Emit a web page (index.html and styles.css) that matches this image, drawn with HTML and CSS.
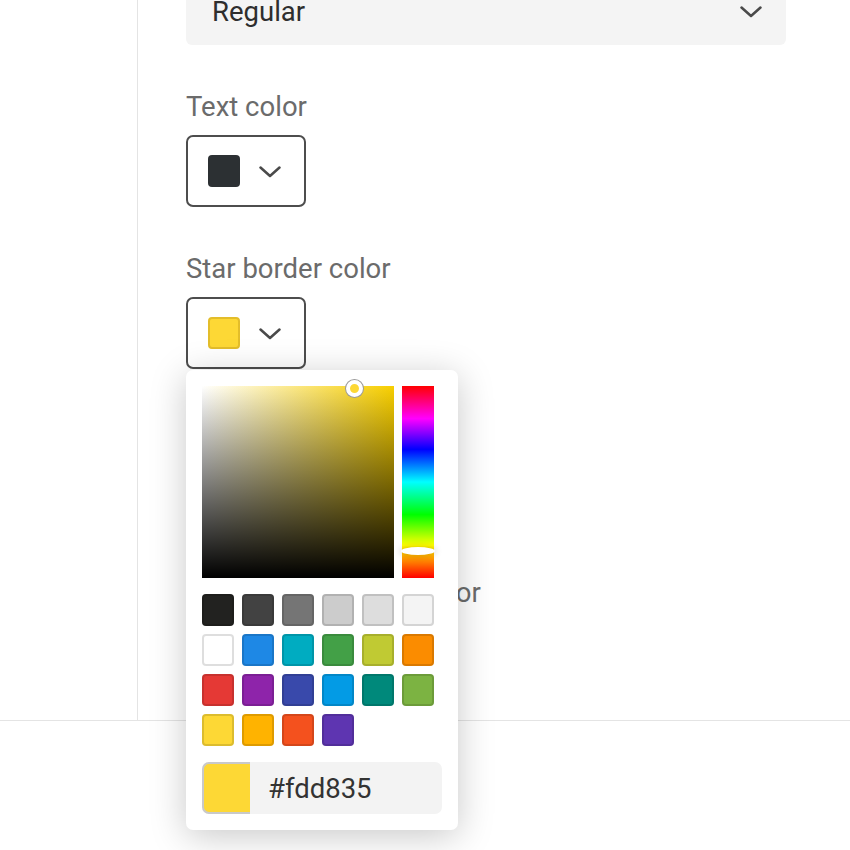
FILE: index.html
```html
<!DOCTYPE html>
<html lang="en">
  <head>
    <meta charset="UTF-8">
    <meta name="viewport" content="width=device-width, initial-scale=1.0">
    <title>Star rating style</title>
    <link rel="stylesheet" href="styles.css">
  </head>
  <body>
    <div class="page">
      <aside class="rail"></aside>
      <main class="panel">
        <div class="select">
          <span class="select-value">Regular</span>
          <svg class="chevron" width="22" height="12" viewBox="0 0 22 12"><polyline points="1.5,1.5 11,10 20.5,1.5"/></svg>
        </div>

        <div class="field">
          <div class="label">Text color</div>
          <button class="color-btn">
            <span class="chip chip-text"></span>
            <svg class="chevron" width="22" height="12" viewBox="0 0 22 12"><polyline points="1.5,1.5 11,10 20.5,1.5"/></svg>
          </button>
        </div>

        <div class="field">
          <div class="label">Star border color</div>
          <div class="picker-anchor">
            <button class="color-btn">
              <span class="chip chip-star"></span>
              <svg class="chevron" width="22" height="12" viewBox="0 0 22 12"><polyline points="1.5,1.5 11,10 20.5,1.5"/></svg>
            </button>

            <div class="picker">
              <div class="picker-top">
                <div class="sv-area">
                  <span class="sv-handle"></span>
                </div>
                <div class="hue-bar">
                  <span class="hue-handle"></span>
                </div>
              </div>
              <div class="swatches">
                <span class="swatch" style="background:#222220"></span>
                <span class="swatch" style="background:#424242"></span>
                <span class="swatch" style="background:#757575"></span>
                <span class="swatch" style="background:#cccccc"></span>
                <span class="swatch" style="background:#dddddd"></span>
                <span class="swatch" style="background:#f4f4f4"></span>
                <span class="swatch" style="background:#ffffff"></span>
                <span class="swatch" style="background:#1e88e5"></span>
                <span class="swatch" style="background:#00acc1"></span>
                <span class="swatch" style="background:#43a047"></span>
                <span class="swatch" style="background:#c0ca33"></span>
                <span class="swatch" style="background:#fb8c00"></span>
                <span class="swatch" style="background:#e53935"></span>
                <span class="swatch" style="background:#8e24aa"></span>
                <span class="swatch" style="background:#3949ab"></span>
                <span class="swatch" style="background:#039be5"></span>
                <span class="swatch" style="background:#00897b"></span>
                <span class="swatch" style="background:#7cb342"></span>
                <span class="swatch" style="background:#fdd835"></span>
                <span class="swatch" style="background:#ffb300"></span>
                <span class="swatch" style="background:#f4511e"></span>
                <span class="swatch" style="background:#5e35b1"></span>
              </div>
              <div class="hex-row">
                <span class="hex-chip"></span>
                <input class="hex-input" type="text" value="#fdd835" spellcheck="false">
              </div>
            </div>
          </div>
        </div>

        <div class="field">
          <div class="label">Star fill color</div>
          <button class="color-btn">
            <span class="chip chip-star"></span>
            <svg class="chevron" width="22" height="12" viewBox="0 0 22 12"><polyline points="1.5,1.5 11,10 20.5,1.5"/></svg>
          </button>
        </div>

        <div class="field">
          <div class="label">Unselected star fill color</div>
          <button class="color-btn">
            <span class="chip chip-empty"></span>
            <svg class="chevron" width="22" height="12" viewBox="0 0 22 12"><polyline points="1.5,1.5 11,10 20.5,1.5"/></svg>
          </button>
        </div>
      </main>
    </div>
    <footer class="footer"></footer>
  </body>
</html>
```

FILE: styles.css
```css
*{
margin:0;
padding:0;
box-sizing:border-box;
}

body{
    background-color: #fff;
    color: #333;
    font-family: Roboto, "Liberation Sans", sans-serif;
    overflow: hidden;
}

.page{
    display:flex;
    height:721px;
    border-bottom:1px solid #e4e4e4;
}

.rail{
    width:138px;
    flex-shrink:0;
    border-right:1px solid #e4e4e4;
}

.panel{
    flex:1;
    padding:0 64px 0 48px;
    overflow:visible;
}

.select{
    width:600px;
    height:67px;
    margin-top:-22px;
    padding:0 24px 0 26px;
    display:flex;
    align-items:center;
    justify-content:space-between;
    background-color:#f4f4f4;
    border-radius:6px;
    font-size:27.5px;
    color:#2e2e2e;
}

.chevron polyline{
    fill:none;
    stroke:#4a4a4a;
    stroke-width:2.5;
    stroke-linecap:round;
    stroke-linejoin:round;
}

.field{
    margin-top:46px;
}

.label{
    font-size:27.5px;
    line-height:32px;
    color:#6b6b6b;
    margin-bottom:12px;
}

.color-btn{
    width:120px;
    height:72px;
    padding:0 0 0 20px;
    display:flex;
    align-items:center;
    gap:19px;
    background-color:#fff;
    border:2px solid #4d4d4d;
    border-radius:7px;
    cursor:pointer;
}

.color-btn .chevron{
    margin-top:2px;
}

.chip{
    width:32px;
    height:32px;
    border-radius:4px;
}

.chip-text{
    background-color:#2c3033;
}

.chip-star{
    background-color:#fdd835;
    border:2px solid #e3bd2a;
}

.chip-empty{
    background-color:#fff;
    border:2px solid #ddd;
}

.picker-anchor{
    position:relative;
    width:120px;
}

/* popup colour picker, lies over the following fields */
.picker{
    position:absolute;
    top:73px;
    left:0;
    z-index:5;
    width:272px;
    padding:16px;
    background-color:#fff;
    border-radius:7px;
    box-shadow:0 6px 36px rgba(0,0,0,0.22);
}

.picker-top{
    display:flex;
    gap:8px;
}

.sv-area{
    position:relative;
    width:192px;
    height:192px;
    background:
        linear-gradient(to top, #000, rgba(0,0,0,0)),
        linear-gradient(to right, #fff, #f8cf00);
}

.sv-handle{
    position:absolute;
    left:144px;
    top:-6px;
    width:17px;
    height:17px;
    border-radius:50%;
    background-color:#fdd835;
    border:4px solid #fff;
    box-shadow:0 0 0 1px #9a9a9a;
}

.hue-bar{
    position:relative;
    width:32px;
    height:192px;
    background:linear-gradient(to bottom, #f00 0%, #f0f 17%, #00f 33%, #0ff 50%, #0f0 67%, #ff0 83%, #f00 100%);
}

.hue-handle{
    position:absolute;
    left:-1px;
    top:161px;
    width:34px;
    height:8px;
    border-radius:50%;
    background-color:#fff;
    box-shadow:0 0 6px 2px rgba(0,0,0,0.12);
}

.swatches{
    margin-top:16px;
    display:grid;
    grid-template-columns:repeat(6, 32px);
    gap:8px;
}

.swatch{
    width:32px;
    height:32px;
    border-radius:4px;
    box-shadow:inset 0 0 0 2px rgba(0,0,0,0.13);
}

.hex-row{
    margin-top:16px;
    height:52px;
    display:flex;
    background-color:#f3f3f3;
    border-radius:7px;
}

.hex-chip{
    width:48px;
    flex-shrink:0;
    background-color:#fdd835;
    border:2px solid #c9c9c9;
    border-right:none;
    border-radius:7px 0 0 7px;
}

.hex-input{
    flex:1;
    min-width:0;
    padding:0 0 0 18px;
    border:none;
    background:none;
    font-family:inherit;
    font-size:27.5px;
    color:#333;
    outline:none;
}

.footer{
    height:129px;
}
```
